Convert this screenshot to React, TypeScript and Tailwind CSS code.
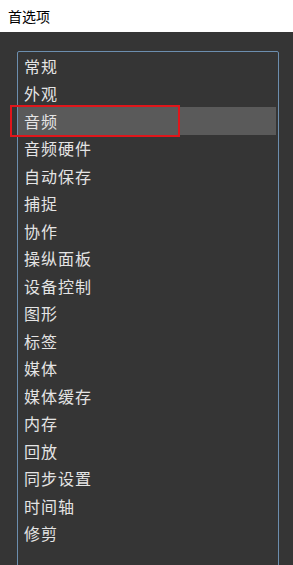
import React from "react";

const items = [
  "常规",
  "外观",
  "音频",
  "音频硬件",
  "自动保存",
  "捕捉",
  "协作",
  "操纵面板",
  "设备控制",
  "图形",
  "标签",
  "媒体",
  "媒体缓存",
  "内存",
  "回放",
  "同步设置",
  "时间轴",
  "修剪",
];

export default function App() {
  return (
    <div
      className="w-[293px] h-[565px] overflow-hidden flex flex-col bg-[#353535]"
      style={{ fontFamily: '"Noto Sans CJK SC", "Liberation Sans", sans-serif' }}
    >
      <div className="h-[32px] shrink-0 bg-white flex items-center px-[8px] text-[14px] text-black">
        首选项
      </div>
      <div className="flex-1 pt-[19px] px-[17px]">
        <div className="relative h-[600px] w-[262px] border border-[#6c8eae] rounded-[2px]">
          <ul className="pr-[2px]">
            {items.map((it, i) => (
              <li
                key={it}
                className={`h-[27.5px] flex items-center pl-[6px] text-[16px] tracking-[1px] text-[#e4e4e4] ${i === 2 ? "bg-[#5a5a5a]" : ""}`}
              >
                {it}
              </li>
            ))}
          </ul>
          <div className="absolute left-[-8px] top-[53px] w-[170px] h-[32px] border-2 border-[#e0161b]" />
        </div>
      </div>
    </div>
  );
}
